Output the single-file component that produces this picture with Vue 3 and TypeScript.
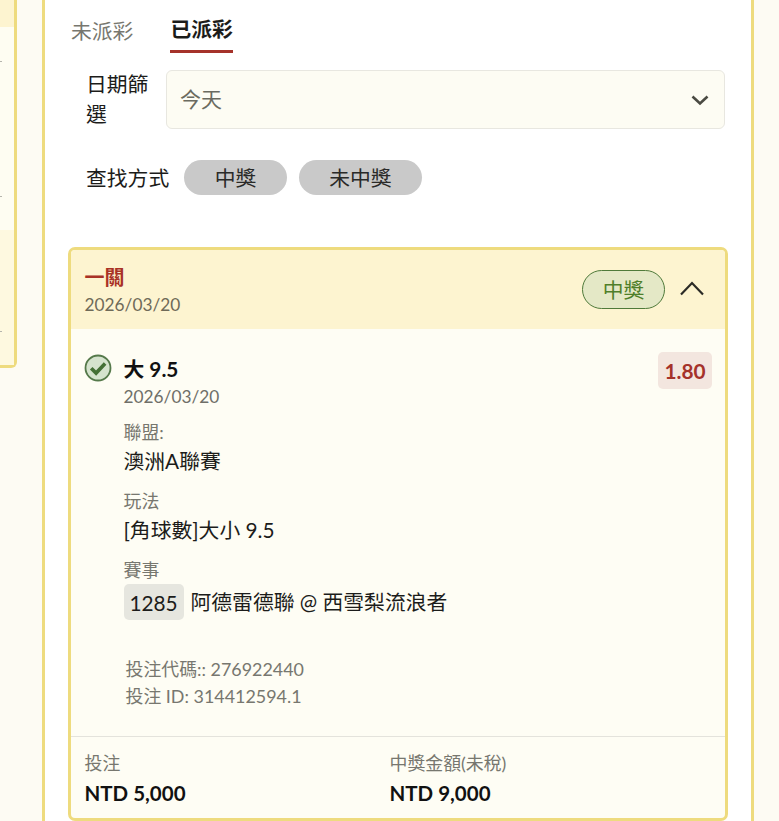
<script setup lang="ts">
const tabs = [
  { label: '未派彩', active: false },
  { label: '已派彩', active: true },
]
const chips = ['中獎', '未中獎']
const footer = [
  { label: '投注', value: 'NTD 5,000' },
  { label: '中獎金額(未稅)', value: 'NTD 9,000' },
]
</script>

<template>
  <div class="page">
    <aside class="side">
      <div class="side-head"></div>
      <div class="side-body">
        <i class="tick first"></i>
        <i class="tick second"></i>
      </div>
      <div class="side-foot">
        <i class="tick third"></i>
      </div>
    </aside>

    <main class="panel">
      <nav class="tabs">
        <div v-for="t in tabs" :key="t.label" class="tab" :class="{ active: t.active }">{{ t.label }}</div>
      </nav>

      <div class="filter">
        <label class="filter-label">日期篩選</label>
        <div class="select">
          <span class="select-text">今天</span>
          <svg width="18" height="12" viewBox="0 0 18 12" fill="none">
            <path d="M1.5 2.5l7.5 7 7.5-7" stroke="#4a4a42" stroke-width="2.6" />
          </svg>
        </div>
      </div>

      <div class="search">
        <span class="search-label">查找方式</span>
        <button v-for="c in chips" :key="c" class="chip">{{ c }}</button>
      </div>

      <section class="card">
        <header class="card-head">
          <div>
            <div class="card-title">一關</div>
            <div class="card-date">2026/03/20</div>
          </div>
          <div class="head-right">
            <span class="badge">中獎</span>
            <svg class="collapse" width="26" height="16" viewBox="0 0 26 16" fill="none">
              <path d="M2 14.5L13 3l11 11.5" stroke="#2b2b26" stroke-width="2.2" />
            </svg>
          </div>
        </header>

        <div class="card-body">
          <div class="bet">
            <svg class="check" width="28" height="28" viewBox="0 0 28 28" fill="none">
              <circle cx="14" cy="14" r="12.5" fill="#d5e3cd" stroke="#55794a" stroke-width="1.8" />
              <path d="M7.2 14.2l4.9 4.9 9-9.6" stroke="#447035" stroke-width="3.6" />
            </svg>
            <div class="bet-main">
              <div class="bet-top">
                <div>
                  <div class="bet-name">大 9.5</div>
                  <div class="bet-date">2026/03/20</div>
                </div>
                <span class="odds">1.80</span>
              </div>
              <div class="field">
                <div class="field-label">聯盟:</div>
                <div class="field-value">澳洲A聯賽</div>
              </div>
              <div class="field">
                <div class="field-label">玩法</div>
                <div class="field-value">[角球數]大小 9.5</div>
              </div>
              <div class="field">
                <div class="field-label">賽事</div>
                <div class="match">
                  <span class="match-no">1285</span>
                  <span class="field-value">阿德雷德聯 @ 西雪梨流浪者</span>
                </div>
              </div>
              <div class="ids">
                <div>投注代碼:: 276922440</div>
                <div>投注 ID: 314412594.1</div>
              </div>
            </div>
          </div>
        </div>

        <footer class="card-foot">
          <div v-for="f in footer" :key="f.label" class="foot-col">
            <div class="foot-label">{{ f.label }}</div>
            <div class="foot-value">{{ f.value }}</div>
          </div>
        </footer>
      </section>
    </main>
  </div>
</template>

<style>
html, body { margin: 0; background: #fdfbf3; overflow: hidden; }
</style>

<style scoped>
.page {
  display: flex;
  gap: 25px;
  height: 821px;
  overflow: hidden;
  background: #fdfbf3;
  font-family: Lato, "Noto Sans CJK TC", sans-serif;
  color: #1c1c1a;
}

/* left card, cut off by the window */
.side {
  width: 17px;
  height: 368px;
  flex: none;
  display: flex;
  flex-direction: column;
  box-sizing: border-box;
  border-right: 3px solid #eedb7e;
  border-bottom: 3px solid #eedb7e;
  border-bottom-right-radius: 6px;
  background: #fefdf2;
}
.side-head { height: 27px; background: #fdf4d0; }
.side-body { height: 203px; display: flex; flex-direction: column; }
.side-foot { flex: 1; background: #fef9e0; display: flex; flex-direction: column; }
.tick { display: block; width: 2px; height: 1px; background: #b5b5ad; }
.tick.first { margin-top: 34px; }
.tick.second { margin-top: 134px; }
.tick.third { margin-top: 101px; }

.panel {
  width: 712px;
  flex: none;
  box-sizing: border-box;
  padding: 0 23px;
  background: #fff;
  border-left: 3px solid #eedb7e;
  border-right: 3px solid #eedb7e;
}

.tabs {
  display: flex;
  gap: 37px;
  padding: 11px 0 0 3px;
}
.tab {
  font-size: 20.8px;
  line-height: 39px;
  color: #77776f;
}
.tab.active {
  color: #1c1c1a;
  font-weight: 700;
  height: 39px;
  line-height: 36px;
  border-bottom: 3px solid #a5322a;
}

.filter {
  display: flex;
  align-items: flex-start;
  gap: 15px;
  margin-top: 17px;
  padding-left: 18px;
}
.filter-label {
  width: 65px;
  flex: none;
  margin-top: -1px;
  font-size: 20.8px;
  line-height: 30px;
}
.select {
  flex: 1;
  height: 59px;
  margin-right: 3px;
  box-sizing: border-box;
  display: flex;
  align-items: center;
  justify-content: space-between;
  padding: 0 15px 0 13px;
  background: #fdfcf3;
  border: 1px solid #e8e7e0;
  border-radius: 6px;
  color: #6b6b60;
}
.select-text { font-size: 21px; padding-bottom: 3px; }

.search {
  display: flex;
  align-items: center;
  gap: 12px;
  margin-top: 31px;
  padding-left: 18px;
}
.search-label { font-size: 20.8px; margin-right: 3px; padding-bottom: 2px; }
.chip {
  height: 35px;
  padding: 0 30.5px 2px;
  border: 0;
  border-radius: 18px;
  background: #c9c9c9;
  color: #2a2a28;
  font: inherit;
  font-size: 20.8px;
}

.card {
  margin-top: 52px;
  border: 3px solid #eedb7e;
  border-radius: 7px;
  background: #fefdf4;
  overflow: hidden;
}
.card-head {
  height: 79px;
  box-sizing: border-box;
  display: flex;
  align-items: center;
  justify-content: space-between;
  padding: 0 20px 0 13.5px;
  background: #fdf4d0;
}
.card-title {
  font-size: 20px;
  line-height: 28px;
  font-weight: 700;
  color: #a93226;
}
.card-date {
  margin-top: 2px;
  font-size: 17.3px;
  line-height: 24px;
  color: #6f6a58;
}
.head-right { display: flex; align-items: center; gap: 14px; }
.collapse { margin-bottom: 4px; }
.badge {
  height: 39px;
  width: 83px;
  box-sizing: border-box;
  display: flex;
  align-items: center;
  justify-content: center;
  padding-bottom: 2px;
  border: 1.5px solid #4f7a3a;
  border-radius: 20px;
  background: #e4e8c6;
  color: #4f7f2a;
  font-size: 20.8px;
}

.card-body { padding: 23px 13px 0 14px; height: 407px; box-sizing: border-box; }
.bet { display: flex; gap: 11.5px; }
.check { flex: none; margin: 2px 0 0 -1px; }
.bet-main { flex: 1; }
.bet-top { display: flex; justify-content: space-between; align-items: flex-start; }
.bet-name {
  margin-top: 2px;
  font-size: 20.8px;
  line-height: 30px;
  font-weight: 700;
  color: #111;
}
.bet-date { margin-top: 1px; font-size: 17.3px; line-height: 24px; color: #6f6f68; }
.odds {
  width: 54px;
  height: 37px;
  line-height: 37px;
  text-align: center;
  background: #f3e6df;
  border-radius: 5px;
  color: #a5322a;
  font-size: 20.8px;
  font-weight: 700;
}
.field { margin-top: 11px; }
.field-label { font-size: 17.9px; line-height: 24px; color: #77776f; }
.field-value { font-size: 20.8px; line-height: 34px; color: #1c1c1a; }
.match { display: flex; align-items: center; gap: 7px; margin-top: 2px; }
.match-no {
  width: 60px;
  height: 36px;
  line-height: 38px;
  text-align: center;
  background: #e6e6df;
  border-radius: 5px;
  font-size: 20.8px;
}
.ids {
  margin: 36px 0 0 2px;
  font-size: 17.9px;
  line-height: 27px;
  color: #77776f;
}

.card-foot {
  display: flex;
  border-top: 1px solid #e4e3dc;
  padding: 13px 14px 7px 13.5px;
}
.foot-col { width: 305px; }
.foot-label { font-size: 17.9px; line-height: 26px; color: #77776f; }
.foot-value { font-size: 20.5px; line-height: 35px; font-weight: 700; color: #111; }
</style>
